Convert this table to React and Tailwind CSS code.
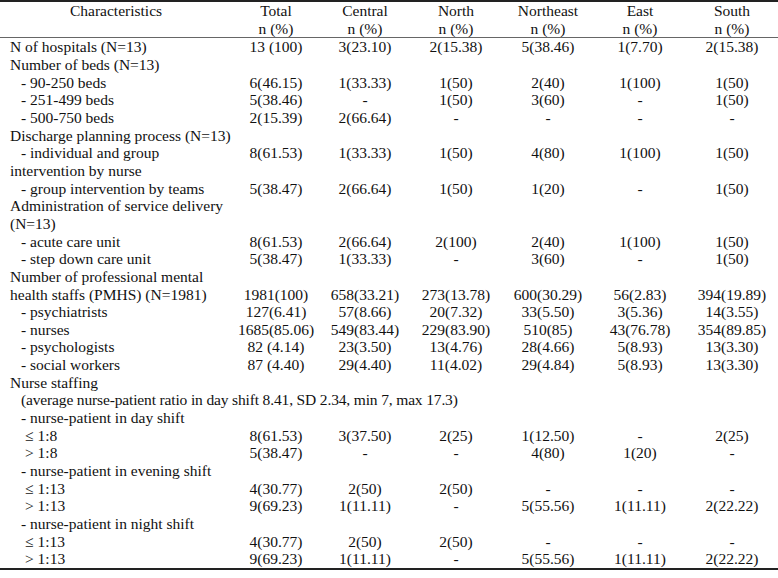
import React from "react";

const rows = [
  { l: "N of hospitals (N=13)", i: 0, v: ["13 (100)", "3(23.10)", "2(15.38)", "5(38.46)", "1(7.70)", "2(15.38)"] },
  { l: "Number of beds (N=13)", i: 0 },
  { l: "- 90-250 beds", i: 1, v: ["6(46.15)", "1(33.33)", "1(50)", "2(40)", "1(100)", "1(50)"] },
  { l: "- 251-499 beds", i: 1, v: ["5(38.46)", "-", "1(50)", "3(60)", "-", "1(50)"] },
  { l: "- 500-750 beds", i: 1, v: ["2(15.39)", "2(66.64)", "-", "-", "-", "-"] },
  { l: "Discharge planning process (N=13)", i: 0 },
  { l: "- individual and group", i: 1, v: ["8(61.53)", "1(33.33)", "1(50)", "4(80)", "1(100)", "1(50)"] },
  { l: "intervention by nurse", i: 0 },
  { l: "- group intervention by teams", i: 1, v: ["5(38.47)", "2(66.64)", "1(50)", "1(20)", "-", "1(50)"] },
  { l: "Administration of service delivery", i: 0 },
  { l: "(N=13)", i: 0 },
  { l: "- acute care unit", i: 1, v: ["8(61.53)", "2(66.64)", "2(100)", "2(40)", "1(100)", "1(50)"] },
  { l: "- step down care unit", i: 1, v: ["5(38.47)", "1(33.33)", "-", "3(60)", "-", "1(50)"] },
  { l: "Number of professional mental", i: 0 },
  { l: "health staffs (PMHS) (N=1981)", i: 0, v: ["1981(100)", "658(33.21)", "273(13.78)", "600(30.29)", "56(2.83)", "394(19.89)"] },
  { l: "- psychiatrists", i: 1, v: ["127(6.41)", "57(8.66)", "20(7.32)", "33(5.50)", "3(5.36)", "14(3.55)"] },
  { l: "- nurses", i: 1, v: ["1685(85.06)", "549(83.44)", "229(83.90)", "510(85)", "43(76.78)", "354(89.85)"] },
  { l: "- psychologists", i: 1, v: ["82 (4.14)", "23(3.50)", "13(4.76)", "28(4.66)", "5(8.93)", "13(3.30)"] },
  { l: "- social workers", i: 1, v: ["87 (4.40)", "29(4.40)", "11(4.02)", "29(4.84)", "5(8.93)", "13(3.30)"] },
  { l: "Nurse staffing", i: 0 },
  { l: "(average nurse-patient ratio in day shift 8.41, SD 2.34, min 7, max 17.3)", i: 3, span: true },
  { l: "- nurse-patient in day shift", i: 1 },
  { l: "\u2264 1:8", i: 2, v: ["8(61.53)", "3(37.50)", "2(25)", "1(12.50)", "-", "2(25)"] },
  { l: "> 1:8", i: 2, v: ["5(38.47)", "-", "-", "4(80)", "1(20)", "-"] },
  { l: "- nurse-patient in evening shift", i: 1 },
  { l: "\u2264 1:13", i: 2, v: ["4(30.77)", "2(50)", "2(50)", "-", "-", "-"] },
  { l: "> 1:13", i: 2, v: ["9(69.23)", "1(11.11)", "-", "5(55.56)", "1(11.11)", "2(22.22)"] },
  { l: "- nurse-patient in night shift", i: 1 },
  { l: "\u2264 1:13", i: 2, v: ["4(30.77)", "2(50)", "2(50)", "-", "-", "-"] },
  { l: "> 1:13", i: 2, v: ["9(69.23)", "1(11.11)", "-", "5(55.56)", "1(11.11)", "2(22.22)"] },
];

const heads = ["Total", "Central", "North", "Northeast", "East", "South"];
const indent = ["pl-[10px]", "pl-[21px]", "pl-[25px]", "pl-[21px] tracking-[-0.15px]"];

export default function App() {
  return (
    <div className="w-[778px] h-[578px] bg-white text-[#111] overflow-hidden" style={{ fontFamily: '"Liberation Serif", "Times New Roman", serif' }}>
      <table className="table-fixed border-collapse text-[15.5px] leading-[17.66px] w-[778px]">
        <colgroup>
          <col className="w-[232px]" />
          <col className="w-[88px]" />
          <col className="w-[90px]" />
          <col className="w-[92px]" />
          <col className="w-[92px]" />
          <col className="w-[92px]" />
          <col className="w-[92px]" />
        </colgroup>
        <thead>
          <tr className="border-t-2 border-[#222] border-b border-b-[#666]">
            <th className="font-normal text-center align-top p-0">Characteristics</th>
            {heads.map((h) => (
              <th key={h} className="font-normal text-center align-top p-0">
                <div>{h}</div>
                <div>n (%)</div>
              </th>
            ))}
          </tr>
        </thead>
        <tbody className="border-b-2 border-[#222]">
          {rows.map((r, k) => (
            <tr key={k}>
              {r.span ? (
                <td colSpan={7} className={`p-0 whitespace-nowrap ${indent[r.i]}`}>{r.l}</td>
              ) : (
                <>
                  <td className={`p-0 whitespace-nowrap ${indent[r.i]}`}>{r.l}</td>
                  {(r.v || ["", "", "", "", "", ""]).map((x, j) => (
                    <td key={j} className="p-0 text-center whitespace-nowrap">{x}</td>
                  ))}
                </>
              )}
            </tr>
          ))}
        </tbody>
      </table>
    </div>
  );
}
